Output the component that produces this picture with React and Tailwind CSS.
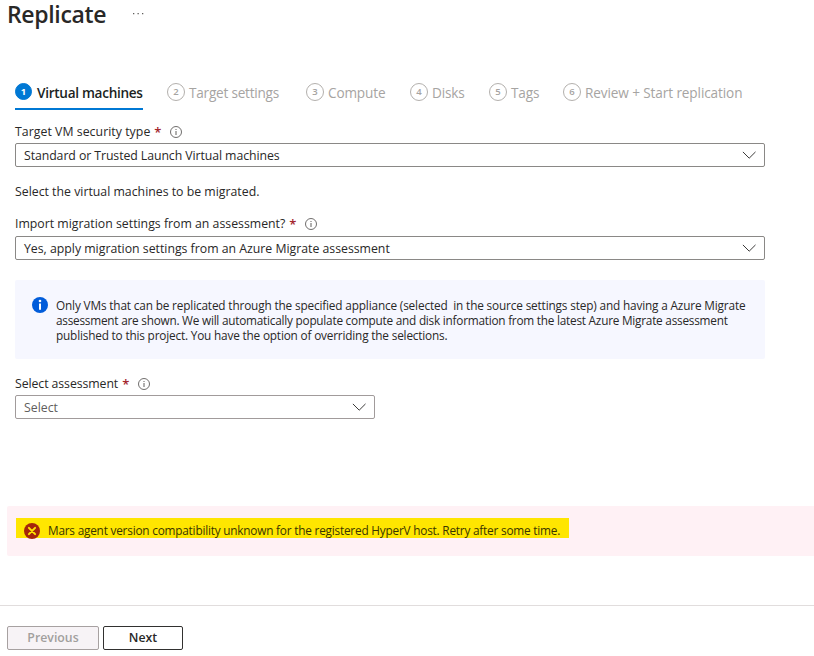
const steps = [
  { label: 'Virtual machines', tab: 'w-[128px]', spacing: 'tracking-[-0.3px]' },
  { label: 'Target settings', tab: 'w-[115px]', spacing: 'tracking-[-0.23px]' },
  { label: 'Compute', tab: 'w-[80px]', spacing: 'tracking-[-0.15px]' },
  { label: 'Disks', tab: 'w-[55px]', spacing: 'tracking-[-0.15px]' },
  { label: 'Tags', tab: 'w-[50px]', spacing: 'tracking-[-0.15px]' },
  { label: 'Review + Start replication', tab: 'w-[182px]', spacing: 'tracking-[-0.11px]' },
];

function Step({ step, index }) {
  const active = index === 0;
  return (
    <div
      className={`flex h-[27px] shrink-0 items-start gap-1 whitespace-nowrap border-b-2 ${step.tab} ${
        active ? 'border-[#0078d4] font-semibold text-[#201f1e]' : 'border-transparent text-[#a6a4a2]'
      }`}
    >
      <span
        className={`flex shrink-0 items-center justify-center rounded-full border text-[9.5px] leading-none ${
          active ? 'mr-[1px] size-[17px] border-[#0078d4] bg-[#0078d4] font-bold text-white' : 'size-[18px] border-[#b3b0ad] font-semibold'
        }`}
      >
        {index + 1}
      </span>
      <span className={`text-[13.6px] leading-[20px] ${step.spacing}`}>{step.label}</span>
    </div>
  );
}

function InfoOutline() {
  return (
    <svg className="size-3" viewBox="0 0 12 12" fill="none" stroke="#605e5c">
      <circle cx="6" cy="6" r="5.5" strokeWidth="0.9" />
      <path d="M6 5v4M6 3v1" strokeWidth="1" />
    </svg>
  );
}

function Label({ children, spacing }) {
  return (
    <div className="flex h-4 items-center whitespace-nowrap">
      <span className={spacing}>{children}</span>
      <span className="ml-[4px] w-[6px] text-[13px] font-semibold text-[#a4262c]">*</span>
      <span className="ml-[10px]">
        <InfoOutline />
      </span>
    </div>
  );
}

function Dropdown({ children, className, spacing }) {
  return (
    <div className={`flex h-6 items-center justify-between rounded-[2px] border pl-2 pr-2 ${className}`}>
      <span className={`mt-[2px] whitespace-nowrap ${spacing}`}>{children}</span>
      <svg className="h-[8px] w-[14px]" viewBox="0 0 14 8" fill="none" stroke="#3b3a39" strokeWidth="1">
        <path d="M.9 .9 7.2 7.2 13.5 .9" />
      </svg>
    </div>
  );
}

export default function App() {
  return (
    <div className="flex h-[656px] w-[814px] flex-col bg-white font-['Open_Sans','Noto_Sans',sans-serif] text-[12.3px] leading-4 text-[#292827]">
      <header className="flex h-[83px] items-start pl-[7px]">
        <h1 className="w-[99px] whitespace-nowrap text-[23px] font-semibold leading-[28px] tracking-[-0.33px]">Replicate</h1>
        <svg className="ml-[26px] mt-[12px] h-[4px] w-[12px]" viewBox="0 0 12 4" fill="#605e5c">
          <path d="M1 1h1.3v1.3H1zM5.5 1h1.3v1.3H5.5zM10 1h1.3v1.3H10z" />
        </svg>
      </header>

      <main className="flex flex-col pl-[15px]">
        <nav className="flex gap-6">
          {steps.map((step, index) => (
            <Step key={step.label} step={step} index={index} />
          ))}
        </nav>

        <div className="mt-[14px]">
          <Label spacing="tracking-[0.04px]">Target VM security type</Label>
        </div>
        <Dropdown className="mt-[3px] w-[750px] border-[#8a8886]" spacing="tracking-[-0.08px]">
          Standard or Trusted Launch Virtual machines
        </Dropdown>

        <p className="mt-[17px] whitespace-nowrap">Select the virtual machines to be migrated.</p>

        <div className="mt-4">
          <Label spacing="tracking-[0px]">Import migration settings from an assessment?</Label>
        </div>
        <Dropdown className="mt-[4px] w-[750px] border-[#8a8886]" spacing="tracking-[-0.01px]">
          Yes, apply migration settings from an Azure Migrate assessment
        </Dropdown>

        <section className="mt-5 flex h-[79px] w-[750px] rounded-[2px] bg-[#f6f7ff] pl-[17px] pt-[17px]">
          <svg className="size-4 shrink-0" viewBox="0 0 16 16">
            <circle cx="8" cy="8" r="8" fill="#015cda" />
            <path d="M7 6.4h2v6.4H7z" fill="#fff" />
            <circle cx="8" cy="4" r="1.3" fill="#fff" />
          </svg>
          <div className="ml-2 mt-[1px] whitespace-pre text-[11.8px] leading-[15px]">
            <p className="tracking-[-0.155px]">{'Only VMs that can be replicated through the specified appliance (selected  in the source settings step) and having a Azure Migrate'}</p>
            <p className="tracking-[-0.235px]">assessment are shown. We will automatically populate compute and disk information from the latest Azure Migrate assessment</p>
            <p className="tracking-[-0.18px]">published to this project. You have the option of overriding the selections.</p>
          </div>
        </section>

        <div className="mt-[17px]">
          <Label spacing="tracking-[-0.08px]">Select assessment</Label>
        </div>
        <Dropdown className="mt-[3px] w-[360px] border-[#a19b9b] text-[#605e5c]" spacing="tracking-[0px]">
          Select
        </Dropdown>
      </main>

      <section className="ml-[7px] mt-[87px] h-[50px] rounded-l-[2px] bg-[#fff1f5] pl-[9px] pt-[12px]">
        <div className="flex h-[20px] w-[553px] items-start bg-[#ffe600] pl-[8px] pt-[5px]">
          <svg className="size-4 shrink-0" viewBox="0 0 16 16">
            <circle cx="8" cy="8" r="8" fill="#a4260b" />
            <path d="m4.9 4.9 6.2 6.2M11.1 4.9l-6.2 6.2" stroke="#ffe600" strokeWidth="2" strokeLinecap="round" />
          </svg>
          <span className="ml-2 whitespace-nowrap text-[11.8px] leading-[15px] tracking-[-0.205px] text-[#3a3500]">
            Mars agent version compatibility unknown for the registered HyperV host. Retry after some time.
          </span>
        </div>
      </section>

      <footer className="mt-[49px] flex gap-1 border-t border-[#e1dddd] pl-[7px] pt-[20px] font-semibold">
        <button className="flex h-6 w-[92px] items-center justify-center rounded-[2px] border border-[#a7a1a1] bg-[#f7f3f6] text-[#a19f9d]">
          Previous
        </button>
        <button className="flex h-6 w-[80px] items-center justify-center rounded-[2px] border border-[#323130] bg-white">
          Next
        </button>
      </footer>
    </div>
  );
}
